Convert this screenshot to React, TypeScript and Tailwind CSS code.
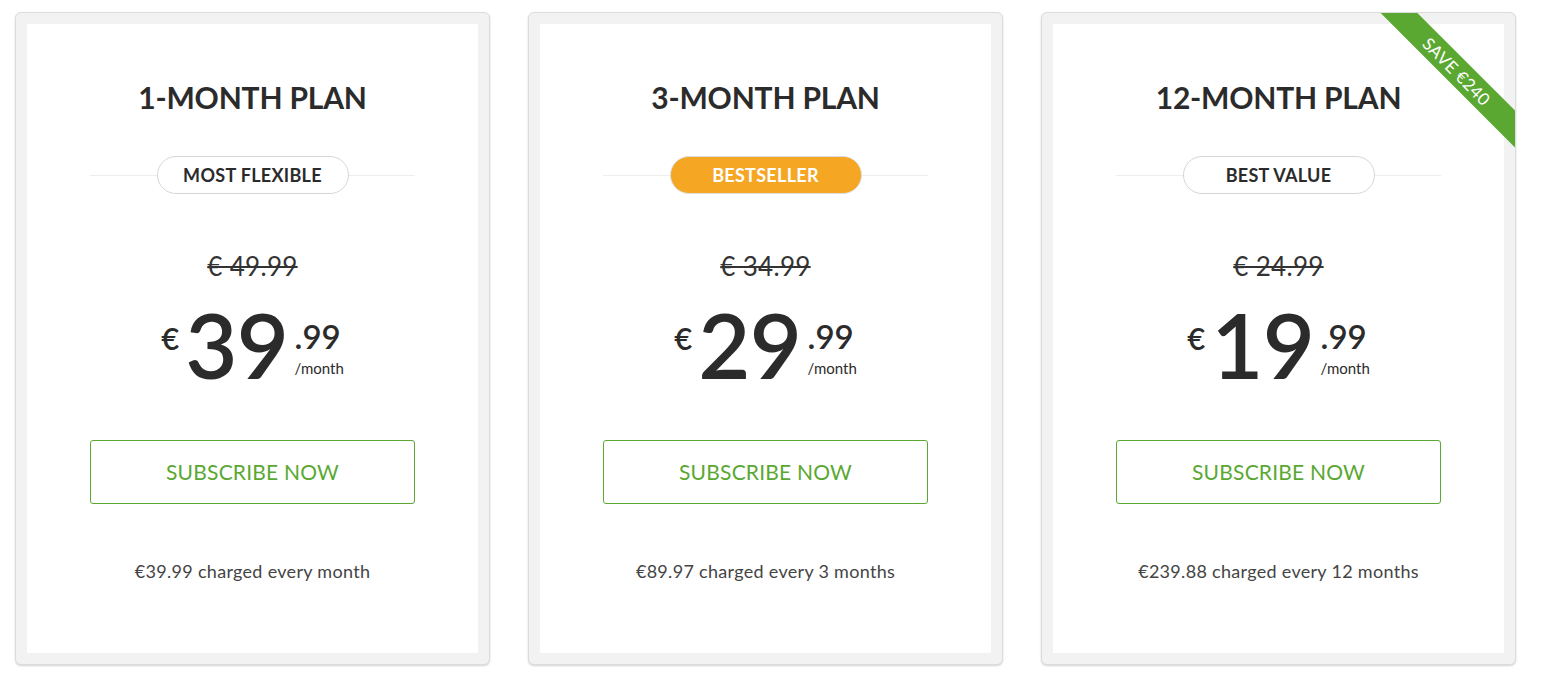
import React from 'react';

interface Plan {
  title: string;
  badge: string;
  highlight?: boolean;
  oldPrice: string;
  whole: string;
  cents: string;
  note: string;
  ribbon?: string;
}

const plans: Plan[] = [
  {
    title: '1-MONTH PLAN',
    badge: 'MOST FLEXIBLE',
    oldPrice: '€ 49.99',
    whole: '39',
    cents: '.99',
    note: '€39.99 charged every month'
  },
  {
    title: '3-MONTH PLAN',
    badge: 'BESTSELLER',
    highlight: true,
    oldPrice: '€ 34.99',
    whole: '29',
    cents: '.99',
    note: '€89.97 charged every 3 months'
  },
  {
    title: '12-MONTH PLAN',
    badge: 'BEST VALUE',
    oldPrice: '€ 24.99',
    whole: '19',
    cents: '.99',
    note: '€239.88 charged every 12 months',
    ribbon: 'SAVE €240'
  }
];

function PlanCard({ plan }: { plan: Plan }) {
  return (
    <div className="relative w-[475px] h-[653px] overflow-hidden rounded-[6px] border border-[#dcdcdc] bg-[#f2f2f2] p-[11px] shadow-[0_1px_2px_rgba(0,0,0,0.18)]">
      {plan.ribbon && (
        <div className="absolute left-[315px] top-[45px] w-[200px] h-[26px] rotate-45 bg-[#5aa832] flex items-center justify-center text-white text-[17px] leading-none tracking-[0.3px]">
          {plan.ribbon}
        </div>
      )}
      <div className="h-full bg-white flex flex-col items-center text-[#2b2b2b]">
        <h2 className="mt-[56px] text-[30px] font-bold leading-[34px] tracking-[-0.2px]">{plan.title}</h2>

        <div className="relative mt-[42px] w-[325px] h-[38px] flex items-center justify-center">
          <div className="absolute inset-x-0 top-1/2 h-px bg-[#eeeeee]" />
          <span
            className={`relative w-[192px] h-[38px] rounded-full border flex items-center justify-center text-[18px] font-bold tracking-[0.3px] ${
              plan.highlight
                ? 'bg-[#f5a623] border-[#dddddd] text-white'
                : 'bg-white border-[#d6d6d6] text-[#2b2b2b]'
            }`}
          >
            {plan.badge}
          </span>
        </div>

        <div className="mt-[57px] text-[26px] leading-[30px] text-[#333] line-through decoration-[1.5px] tracking-[0.3px]">
          {plan.oldPrice}
        </div>

        <div className="mt-[18px] h-[100px] flex items-start">
          <span className="mt-[24px] mr-[6px] text-[31px] leading-none font-semibold">€</span>
          <span className="text-[90px] leading-none font-semibold tracking-[-0.5px]">{plan.whole}</span>
          <div className="ml-[6px] mt-[21px] flex flex-col">
            <span className="text-[33px] leading-none font-semibold">{plan.cents}</span>
            <span className="mt-[8px] text-[15px] leading-none">/month</span>
          </div>
        </div>

        <button className="mt-[41px] w-[325px] h-[64px] rounded-[3px] border border-[#5aa832] text-[#5aa832] text-[21px] bg-white tracking-[0.2px]">
          SUBSCRIBE NOW
        </button>

        <p className="mt-[54px] text-[18px] text-[#444] tracking-[0.3px]">{plan.note}</p>
      </div>
    </div>
  );
}

export default function App() {
  return (
    <div className="min-h-screen bg-white pl-[15px] pt-[12px] font-['Lato',sans-serif]">
      <div className="flex gap-[38px]">
        {plans.map(plan => (
          <PlanCard key={plan.title} plan={plan} />
        ))}
      </div>
    </div>
  );
}
